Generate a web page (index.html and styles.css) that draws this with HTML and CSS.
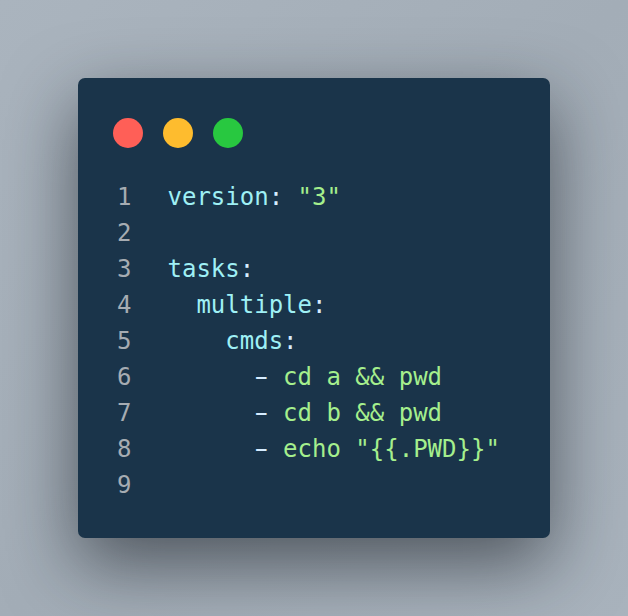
FILE: index.html
```html
<!DOCTYPE html>
<html>
<head>
<meta charset="utf-8">
<link rel="stylesheet" href="styles.css">
</head>
<body>
<div class="card">
  <div class="lights">
    <span class="dot red"></span>
    <span class="dot yellow"></span>
    <span class="dot green"></span>
  </div>
  <div class="code">
    <div class="line"><span class="num">1</span><span class="src"><span class="key">version</span><span class="pun">:</span> <span class="str">"3"</span></span></div>
    <div class="line"><span class="num">2</span><span class="src"></span></div>
    <div class="line"><span class="num">3</span><span class="src"><span class="key">tasks</span><span class="pun">:</span></span></div>
    <div class="line"><span class="num">4</span><span class="src">  <span class="key">multiple</span><span class="pun">:</span></span></div>
    <div class="line"><span class="num">5</span><span class="src">    <span class="key">cmds</span><span class="pun">:</span></span></div>
    <div class="line"><span class="num">6</span><span class="src">      <span class="dash">-</span> <span class="str">cd a &amp;&amp; pwd</span></span></div>
    <div class="line"><span class="num">7</span><span class="src">      <span class="dash">-</span> <span class="str">cd b &amp;&amp; pwd</span></span></div>
    <div class="line"><span class="num">8</span><span class="src">      <span class="dash">-</span> <span class="str">echo "{{.PWD}}"</span></span></div>
    <div class="line"><span class="num">9</span><span class="src"></span></div>
  </div>
</div>
</body>
</html>
```
FILE: styles.css
```css
html, body {
  margin: 0;
  padding: 0;
}
body {
  width: 628px;
  height: 616px;
  box-sizing: border-box;
  padding: 78px;
  background: linear-gradient(135deg, #aab4be 0%, #a3adb7 50%, #a9b3bd 100%);
  overflow: hidden;
}
.card {
  width: 472px;
  height: 460px;
  box-sizing: border-box;
  background: #1a344a;
  border-radius: 7px;
  box-shadow: 0 26px 72px rgba(20, 25, 32, 0.6);
  padding: 40px 35px 37px 35px;
  display: flex;
  flex-direction: column;
}
.lights {
  display: flex;
  gap: 20px;
  height: 30px;
}
.dot {
  width: 30px;
  height: 30px;
  border-radius: 50%;
}
.red { background: #ff5f57; }
.yellow { background: #febc2e; }
.green { background: #28c840; }
.code {
  margin-top: 31px;
  font-family: "DejaVu Sans Mono", monospace;
  font-size: 24px;
  line-height: 36px;
}
.line {
  display: flex;
  height: 36px;
  white-space: pre;
}
.num {
  width: 14.5px;
  margin-left: 4px;
  margin-right: 36px;
  color: #a6acb2;
  text-align: right;
}
.src { color: #d6ecff; }
.key { color: #9ff0f5; }
.pun { color: #d6ecff; }
.dash {
  display: inline-block;
  color: #d6ecff;
  transform: scaleX(1.7);
}
.str { color: #a5ef8d; }
```
